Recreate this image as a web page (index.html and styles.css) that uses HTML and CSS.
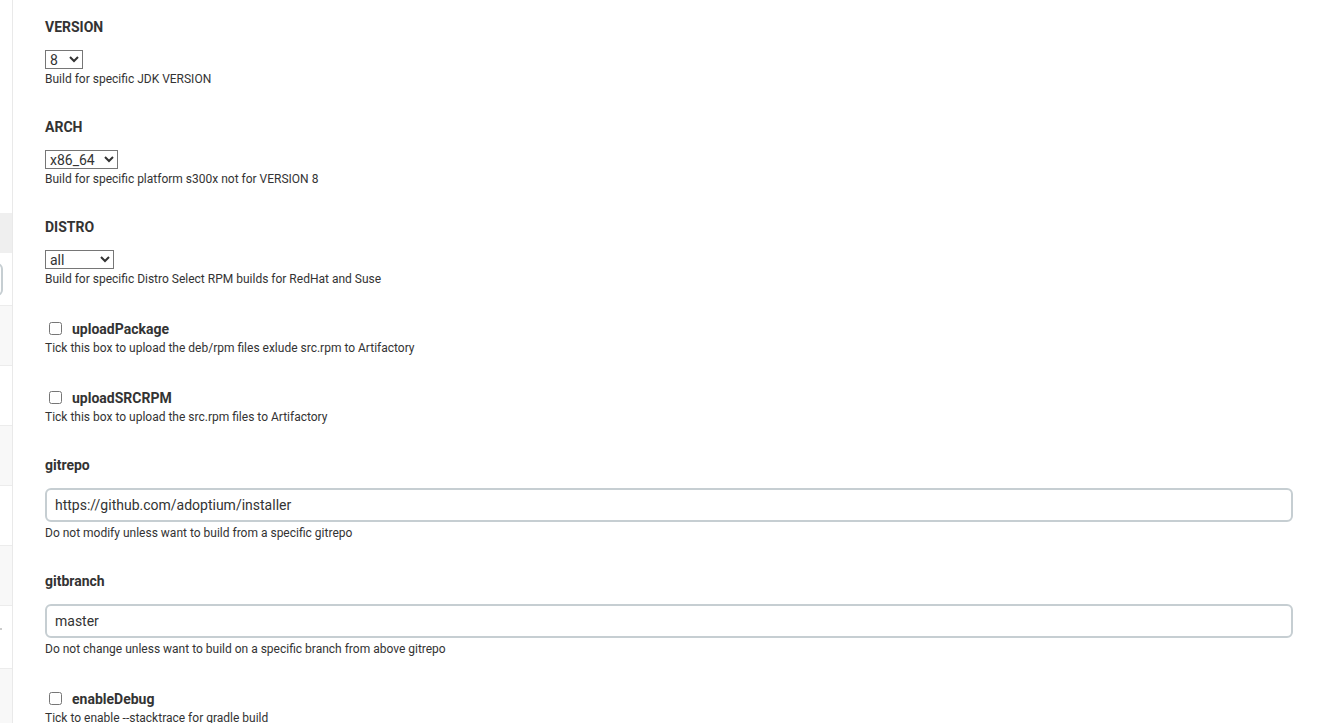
FILE: index.html
```html
<!DOCTYPE html>
<html>
<head>
<meta charset="utf-8">
<link rel="stylesheet" href="styles.css">
</head>
<body>
<aside class="side">
  <div class="side-top"></div>
  <div class="side-row side-head"></div>
  <div class="side-row side-search"><div class="side-input"></div></div>
  <div class="side-row alt"></div>
  <div class="side-row"></div>
  <div class="side-row alt"></div>
  <div class="side-row"></div>
  <div class="side-row alt"></div>
  <div class="side-row tall"><span class="tick"></span></div>
  <div class="side-row alt rest"></div>
</aside>
<main class="main">
  <div class="param">
    <div class="label">VERSION</div>
    <select class="sel sel-version"><option>8</option><option>11</option><option>17</option></select>
    <div class="desc">Build for specific JDK VERSION</div>
  </div>
  <div class="param">
    <div class="label">ARCH</div>
    <select class="sel sel-arch"><option>x86_64</option><option>aarch64</option><option>s390x</option></select>
    <div class="desc">Build for specific platform s300x not for VERSION 8</div>
  </div>
  <div class="param">
    <div class="label">DISTRO</div>
    <select class="sel sel-distro"><option>all</option><option>debian</option><option>redhat</option></select>
    <div class="desc">Build for specific Distro Select RPM builds for RedHat and Suse</div>
  </div>
  <div class="param check">
    <label class="check-row"><input type="checkbox"><span class="check-label">uploadPackage</span></label>
    <div class="desc">Tick this box to upload the deb/rpm files exlude src.rpm to Artifactory</div>
  </div>
  <div class="param check">
    <label class="check-row"><input type="checkbox"><span class="check-label">uploadSRCRPM</span></label>
    <div class="desc">Tick this box to upload the src.rpm files to Artifactory</div>
  </div>
  <div class="param">
    <div class="label">gitrepo</div>
    <input class="text" type="text" value="https://github.com/adoptium/installer">
    <div class="desc desc-text">Do not modify unless want to build from a specific gitrepo</div>
  </div>
  <div class="param">
    <div class="label">gitbranch</div>
    <input class="text" type="text" value="master">
    <div class="desc desc-text">Do not change unless want to build on a specific branch from above gitrepo</div>
  </div>
  <div class="param check">
    <label class="check-row"><input type="checkbox"><span class="check-label">enableDebug</span></label>
    <div class="desc">Tick to enable --stacktrace for gradle build</div>
  </div>
</main>
</body>
</html>
```
FILE: styles.css
```css
html, body {
  margin: 0;
  padding: 0;
  background: #fff;
  height: 723px;
  overflow: hidden;
}
body {
  display: flex;
  font-family: Roboto, "Liberation Sans", sans-serif;
  color: #333;
}
.side {
  width: 12px;
  flex: none;
  border-right: 1px solid #e9e9e9;
  display: flex;
  flex-direction: column;
  overflow: hidden;
}
.side-top {
  height: 213px;
  flex: none;
}
.side-row {
  height: 60px;
  flex: none;
  border-top: 1px solid #ececec;
  box-sizing: border-box;
  position: relative;
}
.side-head {
  height: 40px;
  background: #efefef;
  border-top: none;
}
.side-search {
  height: 52px;
  border-top: none;
}
.side-input {
  position: absolute;
  right: 9px;
  top: 10px;
  width: 40px;
  height: 33px;
  border: 2px solid #c6ced2;
  border-radius: 6px;
  box-sizing: border-box;
}
.side-row.alt {
  background: #f8f8f8;
}
.side-row.tall {
  height: 63px;
}
.side-row.rest {
  flex: 1;
}
.tick {
  position: absolute;
  left: 0;
  top: 22px;
  width: 2px;
  height: 2px;
  background: #ccc;
}
.main {
  flex: 1;
  padding: 17px 34px 0 32px;
}
.param {
  margin-bottom: 30px;
}
.param.check {
  padding-top: 2px;
  margin-bottom: 30px;
}
.label {
  font-size: 14px;
  font-weight: 700;
  line-height: 20px;
  margin-bottom: 13px;
}
.sel {
  display: block;
  font-family: Roboto, "Liberation Sans", sans-serif;
  font-size: 14px;
  color: #333;
  height: 19px;
  margin: 0;
  padding: 0;
  border: 1px solid #767676;
  border-radius: 0;
  background: #fff;
}
.sel-version { width: 38px; }
.sel-arch { width: 73px; }
.sel-distro { width: 69px; }
.desc {
  font-size: 12px;
  line-height: 16px;
  margin-top: 2px;
}
.desc-text {
  margin-top: 3px;
}
.check-row {
  display: flex;
  align-items: center;
  height: 20px;
}
.check-row input {
  margin: 0 10px 2px 4px;
  width: 13px;
  height: 13px;
}
.check-label {
  font-size: 14px;
  font-weight: 700;
  line-height: 20px;
}
.check .desc {
  margin-top: 1px;
}
.text {
  display: block;
  width: 100%;
  height: 34px;
  box-sizing: border-box;
  border: 2px solid #c6ced2;
  border-radius: 6px;
  padding: 0 8px;
  font-family: Roboto, "Liberation Sans", sans-serif;
  font-size: 14px;
  color: #333;
  background: #fff;
  outline: none;
}
```
